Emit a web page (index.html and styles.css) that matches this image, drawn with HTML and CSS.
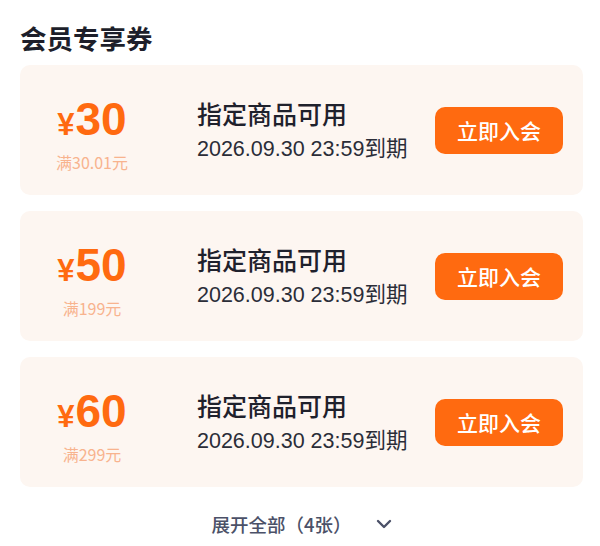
FILE: index.html
```html
<!DOCTYPE html>
<html lang="zh-CN">
<head>
  <meta charset="UTF-8">
  <title>会员专享券</title>
  <link rel="stylesheet" href="styles.css">
</head>
<body>
  <div class="panel">
    <h2>会员专享券</h2>

    <div class="coupon-list">
      <div class="coupon">
        <div class="amount">
          <div class="price"><span class="yen">¥</span>30</div>
          <div class="limit">满30.01元</div>
        </div>
        <div class="info">
          <p class="name">指定商品可用</p>
          <p class="expire">2026.09.30 23:59到期</p>
        </div>
        <button class="join">立即入会</button>
      </div>

      <div class="coupon">
        <div class="amount">
          <div class="price"><span class="yen">¥</span>50</div>
          <div class="limit">满199元</div>
        </div>
        <div class="info">
          <p class="name">指定商品可用</p>
          <p class="expire">2026.09.30 23:59到期</p>
        </div>
        <button class="join">立即入会</button>
      </div>

      <div class="coupon">
        <div class="amount">
          <div class="price"><span class="yen">¥</span>60</div>
          <div class="limit">满299元</div>
        </div>
        <div class="info">
          <p class="name">指定商品可用</p>
          <p class="expire">2026.09.30 23:59到期</p>
        </div>
        <button class="join">立即入会</button>
      </div>
    </div>

    <div class="more">
      <span>展开全部（4张）</span>
      <svg class="chevron" width="16" height="16" viewBox="0 0 16 16">
        <path d="M2 5 L8 11 L14 5" fill="none" stroke="#4b5168" stroke-width="2.4" stroke-linecap="round" stroke-linejoin="round"/>
      </svg>
    </div>
  </div>
</body>
</html>
```

FILE: styles.css
```css
body {
  font-family: "Liberation Sans", "Noto Sans CJK SC", sans-serif;
  margin: 0;
  background: #fff;
}

.panel {
  padding: 20px 17px 0 20px;
}

h2 {
  margin: 0 0 9px;
  font-family: "Noto Sans CJK SC", sans-serif;
  font-size: 26.5px;
  line-height: 36px;
  font-weight: 700;
  color: #1d1f2b;
}

.coupon-list {
  display: flex;
  flex-direction: column;
  gap: 16px;
}

.coupon {
  display: flex;
  align-items: center;
  height: 130px;
  padding-right: 20px;
  border-radius: 10px;
  background: #fdf6f1;
}

.amount {
  width: 144px;
  padding-top: 6px;
  text-align: center;
  color: #ff6a10;
}

.price {
  font-family: "Liberation Sans", "Noto Sans CJK SC", sans-serif;
  font-size: 46px;
  line-height: 48px;
  font-weight: 700;
}

.yen {
  font-size: 31px;
  margin-right: 1px;
}

.limit {
  margin-top: 3px;
  font-family: "Noto Sans CJK SC", sans-serif;
  font-size: 16px;
  line-height: 20px;
  color: #f8b38e;
}

.info {
  flex: 1;
  margin-left: 33px;
}

.name {
  margin: 0;
  font-family: "Noto Sans CJK SC", sans-serif;
  font-size: 25px;
  line-height: 30px;
  font-weight: 500;
  color: #1f212c;
}

.expire {
  margin: 8px 0 0;
  font-size: 21.5px;
  line-height: 26px;
  color: #2b2d38;
}

.join {
  width: 128px;
  height: 47px;
  border: none;
  border-radius: 10px;
  background: #ff6a10;
  color: #fff;
  font-family: "Noto Sans CJK SC", sans-serif;
  font-size: 21px;
  font-weight: 500;
  cursor: pointer;
}

.more {
  display: flex;
  justify-content: center;
  align-items: center;
  gap: 24px;
  margin-top: 24px;
  color: #4b5168;
  font-family: "Noto Sans CJK SC", sans-serif;
  font-size: 18.5px;
  line-height: 26px;
  font-weight: 500;
}

.chevron {
  display: block;
}
```
